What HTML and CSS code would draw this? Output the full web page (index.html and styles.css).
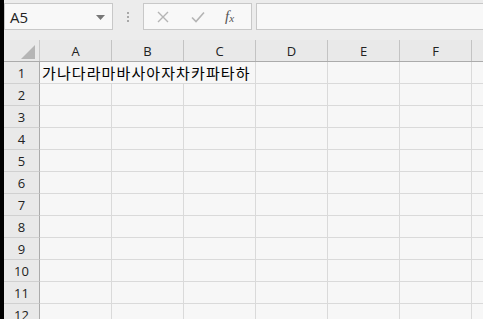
FILE: index.html
```html
<!DOCTYPE html>
<html lang="ko">
<head>
<meta charset="utf-8">
<link rel="stylesheet" href="styles.css">
</head>
<body>
<div class="edge"></div>
<div class="app">
  <div class="toolbar">
    <div class="namebox">
      <span class="ref">A5</span>
      <svg class="drop" width="9" height="5" viewBox="0 0 9 5"><path d="M0 0H9L4.5 5Z" fill="#777"/></svg>
    </div>
    <div class="dots"><i></i><i></i><i></i></div>
    <div class="fxbox">
      <svg class="ic" width="12" height="12" viewBox="0 0 12 12"><path d="M1 1L11 11M11 1L1 11" stroke="#b4b4b4" stroke-width="1.4" fill="none"/></svg>
      <svg class="ic" width="14" height="12" viewBox="0 0 14 12"><path d="M1 6.5L5 10.5L13 1.5" stroke="#b4b4b4" stroke-width="1.6" fill="none"/></svg>
      <span class="fx">f<sub>x</sub></span>
    </div>
    <div class="formula"></div>
  </div>
  <div class="sheet">
    <div class="hrow">
      <div class="corner"><svg width="14" height="14" viewBox="0 0 14 14"><path d="M14 0V14H0Z" fill="#b5b5b5"/></svg></div>
      <div class="ch">A</div><div class="ch">B</div><div class="ch">C</div><div class="ch">D</div><div class="ch">E</div><div class="ch">F</div><div class="ch last"></div>
    </div>
    <div class="row"><div class="rh">1</div><div class="c"><span class="txt">가나다라마바사아자차카파타하</span></div><div class="c"></div><div class="c"></div><div class="c"></div><div class="c"></div><div class="c"></div><div class="c last"></div></div>
    <div class="row"><div class="rh">2</div><div class="c"></div><div class="c"></div><div class="c"></div><div class="c"></div><div class="c"></div><div class="c"></div><div class="c last"></div></div>
    <div class="row"><div class="rh">3</div><div class="c"></div><div class="c"></div><div class="c"></div><div class="c"></div><div class="c"></div><div class="c"></div><div class="c last"></div></div>
    <div class="row"><div class="rh">4</div><div class="c"></div><div class="c"></div><div class="c"></div><div class="c"></div><div class="c"></div><div class="c"></div><div class="c last"></div></div>
    <div class="row"><div class="rh">5</div><div class="c"></div><div class="c"></div><div class="c"></div><div class="c"></div><div class="c"></div><div class="c"></div><div class="c last"></div></div>
    <div class="row"><div class="rh">6</div><div class="c"></div><div class="c"></div><div class="c"></div><div class="c"></div><div class="c"></div><div class="c"></div><div class="c last"></div></div>
    <div class="row"><div class="rh">7</div><div class="c"></div><div class="c"></div><div class="c"></div><div class="c"></div><div class="c"></div><div class="c"></div><div class="c last"></div></div>
    <div class="row"><div class="rh">8</div><div class="c"></div><div class="c"></div><div class="c"></div><div class="c"></div><div class="c"></div><div class="c"></div><div class="c last"></div></div>
    <div class="row"><div class="rh">9</div><div class="c"></div><div class="c"></div><div class="c"></div><div class="c"></div><div class="c"></div><div class="c"></div><div class="c last"></div></div>
    <div class="row"><div class="rh">10</div><div class="c"></div><div class="c"></div><div class="c"></div><div class="c"></div><div class="c"></div><div class="c"></div><div class="c last"></div></div>
    <div class="row"><div class="rh">11</div><div class="c"></div><div class="c"></div><div class="c"></div><div class="c"></div><div class="c"></div><div class="c"></div><div class="c last"></div></div>
    <div class="row"><div class="rh">12</div><div class="c"></div><div class="c"></div><div class="c"></div><div class="c"></div><div class="c"></div><div class="c"></div><div class="c last"></div></div>
  </div>
</div>
</body>
</html>
```
FILE: styles.css
```css
* { box-sizing: border-box; }
html, body { margin: 0; padding: 0; }
body {
  width: 483px;
  height: 319px;
  overflow: hidden;
  display: flex;
  background: #f7f7f7;
  font-family: "Open Sans", "Noto Sans", sans-serif;
}
.edge { width: 4px; flex: none; background: #000; }
.app { flex: 1; display: flex; flex-direction: column; min-width: 0; overflow: hidden; }

.toolbar {
  height: 40px;
  flex: none;
  background: #ececec;
  display: flex;
  align-items: flex-start;
  padding-top: 3px;
}
.namebox {
  width: 109px;
  height: 27px;
  border: 1px solid #c8c8c8;
  background: #f8f8f8;
  display: flex;
  align-items: center;
  justify-content: space-between;
  padding: 0 7px 0 5px;
}
.ref { font-size: 15px; color: #222; font-family: "Open Sans", sans-serif; }
.drop { margin-top: 1px; }
.dots {
  width: 30px;
  height: 27px;
  display: flex;
  flex-direction: column;
  align-items: center;
  justify-content: center;
  gap: 2px;
}
.dots i { display: block; width: 2px; height: 2px; background: #a8a8a8; }
.fxbox {
  width: 109px;
  height: 27px;
  border: 1px solid #c8c8c8;
  background: #f8f8f8;
  display: flex;
  align-items: center;
  padding-left: 13px;
  gap: 22px;
}
.ic { display: block; }
.fx {
  font-family: "Liberation Serif", serif;
  font-style: italic;
  font-size: 15px;
  color: #555;
  margin-left: -2px;
}
.fx sub { font-size: 11px; vertical-align: -1px; }
.formula {
  flex: 1;
  height: 27px;
  margin-left: 4px;
  border: 1px solid #c8c8c8;
  border-right: none;
  background: #f8f8f8;
}

.sheet { flex: 1; display: flex; flex-direction: column; }
.hrow {
  display: flex;
  height: 22px;
  flex: none;
  background: #e9e9e9;
  border-bottom: 1px solid #ababab;
}
.corner {
  width: 36px;
  flex: none;
  border-right: 1px solid #c8c8c8;
  display: flex;
  align-items: flex-end;
  justify-content: flex-end;
  padding: 0 4px 2px 0;
}
.corner svg { display: block; }
.ch {
  width: 72px;
  flex: none;
  border-right: 1px solid #c3c3c3;
  font-size: 13px;
  color: #222;
  display: flex;
  align-items: center;
  justify-content: center;
  padding-top: 1px;
}
.ch.last, .c.last { flex: 1; border-right: none; }
.row { display: flex; height: 22px; flex: none; }
.rh {
  width: 36px;
  flex: none;
  background: #e9e9e9;
  border-right: 1px solid #ababab;
  border-bottom: 1px solid #d0d0d0;
  font-size: 13px;
  color: #222;
  display: flex;
  align-items: center;
  justify-content: center;
}
.c {
  width: 72px;
  flex: none;
  border-right: 1px solid #dadada;
  border-bottom: 1px solid #dadada;
  position: relative;
}
.txt {
  position: absolute;
  left: 2px;
  top: 0;
  line-height: 21px;
  white-space: nowrap;
  font-family: "Noto Sans CJK KR", sans-serif;
  font-size: 15px;
  letter-spacing: 1.1px;
  color: #000;
  background: #f7f7f7;
  z-index: 1;
}
```
